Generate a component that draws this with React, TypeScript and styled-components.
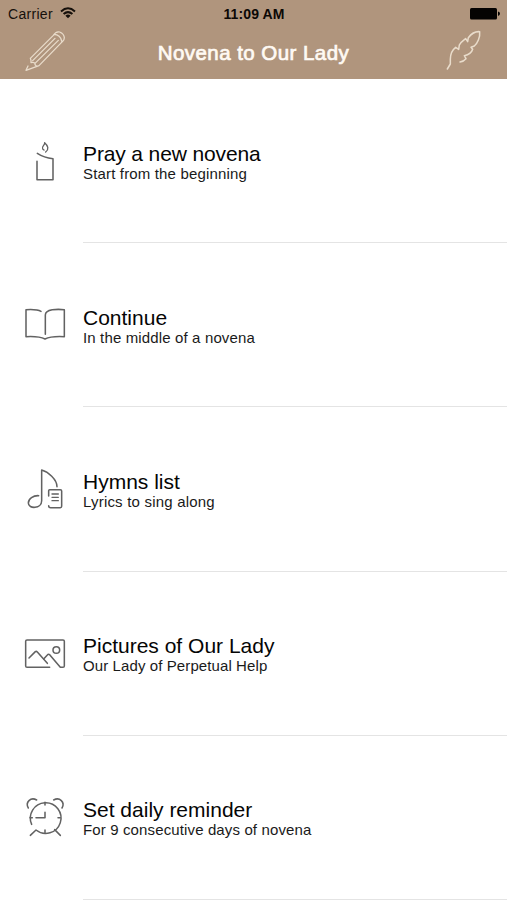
import React from 'react';
import styled, { createGlobalStyle } from 'styled-components';

const Global = createGlobalStyle`
  * { box-sizing: border-box; }
  body { margin: 0; background: #fff; font-family: 'Liberation Sans', Arial, sans-serif; }
`;

const Screen = styled.div`
  width: 507px;
  height: 900px;
  overflow: hidden;
  display: grid;
  grid-template-rows: 79px 1fr;
  background: #fff;
`;

const Header = styled.header`
  display: grid;
  grid-template-rows: 27px 52px;
  background: #b0957d;
`;

const StatusBar = styled.div`
  display: grid;
  grid-template-columns: 1fr auto 1fr;
  align-items: center;
  padding: 1px 7px 0 8px;
  color: #16100b;
  font-size: 14px;
`;

const Carrier = styled.div`
  display: flex;
  align-items: center;
  gap: 7px;
  letter-spacing: 0.3px;
`;

const WifiIcon = styled.svg`
  margin-top: -2px;
`;

const Clock = styled.div`
  font-size: 14px;
  font-weight: 700;
  letter-spacing: 0.1px;
  color: #0c0805;
`;

const BatteryIcon = styled.svg`
  justify-self: end;
`;

const NavBar = styled.div`
  display: grid;
  grid-template-columns: 60px 1fr 60px;
  align-items: center;
  padding: 0 14px;
`;

const NavTitle = styled.h1`
  margin: 0;
  text-align: center;
  color: #fffaf4;
  font-size: 20.5px;
  font-weight: 400;
  line-height: 24px;
  letter-spacing: 0.45px;
  -webkit-text-stroke: 0.7px #fffaf4;
`;

const NavIcon = styled.svg`
  width: 60px;
  height: 52px;
  fill: none;
  stroke: #e9dccb;
  stroke-width: 4.6;
  stroke-linecap: round;
  stroke-linejoin: round;
`;

const List = styled.main`
  display: grid;
  grid-template-rows: repeat(5, 1fr);
`;

const Row = styled.section`
  display: grid;
  grid-template-columns: 60px 1fr;
  column-gap: 8px;
  padding-left: 15px;
`;

const RowIcon = styled.svg`
  align-self: center;
  width: 60px;
  height: 60px;
  fill: none;
  stroke: #626262;
  stroke-width: 4.6;
  stroke-linecap: round;
  stroke-linejoin: round;
`;

const RowText = styled.div`
  display: flex;
  flex-direction: column;
  justify-content: center;
  border-bottom: 1px solid #e4e4e4;
  padding-top: 3px;
`;

const Title = styled.div<{ $track: number }>`
  font-size: 21px;
  line-height: 23px;
  color: #050505;
  letter-spacing: ${(p) => p.$track}px;
`;

const Subtitle = styled.div<{ $track: number }>`
  font-size: 15px;
  line-height: 18px;
  color: #1a1a1a;
  letter-spacing: ${(p) => p.$track}px;
`;

const Candle = () => (
  <RowIcon viewBox="0 3 180 180">
    <path d="M66 94V149H114V86C97 84 81 79 67 70" />
    <path d="M83 57C78 49 91 46 89 38C99 47 103 57 92 66M83 57L87 60" strokeWidth="4" />
  </RowIcon>
);

const Book = () => (
  <RowIcon viewBox="0 1 180 180">
    <path d="M78 50C66 43 49 44 33 45V126C52 125 74 125 90 133C106 125 129 125 148 126V45C127 43 91 43 91 61V119" />
  </RowIcon>
);

const Hymn = () => (
  <RowIcon viewBox="0 -2 180 180">
    <path d="M71 108C55 107 40 117 40 130C40 149 80 148 80 123V31C99 36 126 59 126 81" />
    <path d="M101 109V93Q101 90 104 90H136Q140 90 140 94V140Q140 144 136 144H107Q101 144 101 138" />
    <path d="M111 103H130M111 113H130M111 123H130" strokeWidth="4" />
  </RowIcon>
);

const Picture = () => (
  <RowIcon viewBox="0 -4 180 180">
    <path d="M104 126H36Q32 126 32 122V48Q32 44 36 44H144Q148 44 148 48V122Q148 126 144 126H136L104 88Q100 85 97 89L86 101" />
    <path d="M42 98L61 79Q64 77 67 80L97 114" />
    <circle cx="124" cy="74" r="10" />
  </RowIcon>
);

const Alarm = () => (
  <RowIcon viewBox="0 3 180 180">
    <path d="M50 112A46 46 0 1 1 63 129L46 145M119 128L136 145" />
    <path d="M90 46V54M90 129V137M45 92H52M129 92H136M90 76V92H63" />
    <path d="M40 63C30 46 47 29 65 39M116 39C134 29 151 46 141 63" />
  </RowIcon>
);

const entries = [
  { Icon: Candle, title: 'Pray a new novena', sub: 'Start from the beginning', tt: -0.13, st: 0.16 },
  { Icon: Book, title: 'Continue', sub: 'In the middle of a novena', tt: 0, st: 0.14 },
  { Icon: Hymn, title: 'Hymns list', sub: 'Lyrics to sing along', tt: 0, st: 0.2 },
  { Icon: Picture, title: 'Pictures of Our Lady', sub: 'Our Lady of Perpetual Help', tt: 0, st: 0.1 },
  { Icon: Alarm, title: 'Set daily reminder', sub: 'For 9 consecutive days of novena', tt: 0, st: 0.13 },
];

export default function App() {
  return (
    <>
      <Global />
      <Screen>
        <Header>
          <StatusBar>
            <Carrier>
              <span>Carrier</span>
              <WifiIcon width="16" height="12" viewBox="0 0 16 12" fill="none" stroke="#16100b" strokeWidth="2">
                <path d="M1 4.4Q8-1.8 15 4.4M3.6 7.1Q8 3.1 12.4 7.1" />
                <path d="M5.4 8.7Q8 6.5 10.6 8.7L8 11.3Z" fill="#16100b" stroke="none" />
              </WifiIcon>
            </Carrier>
            <Clock>11:09 AM</Clock>
            <BatteryIcon width="30" height="12" viewBox="0 0 30 12">
              <rect width="27" height="11.5" rx="1.5" fill="#050302" />
              <path d="M28 3.6Q30 4.2 30 5.8T28 8Z" fill="#050302" />
            </BatteryIcon>
          </StatusBar>
          <NavBar>
            <NavIcon viewBox="42 81 180 156">
              <path
                d="M91 175L160 106Q168 93 179 96Q192 101 193 113Q193 120 187 125L117 197L78 211L84 198M91 175Q94 181 93 188Q101 186 105 190Q104 196 110 198M98 182L165 115M105 190L175 121M162 103Q181 104 185 123"
                strokeWidth="3.8"
              />
            </NavIcon>
            <NavTitle>Novena to Our Lady</NavTitle>
            <NavIcon viewBox="39 81 180 156">
              <path d="M82 207L91 192V178C91 162 99 148 107 142L116 148L118 135C122 126 133 120 137 116L143 125L145 113C154 101 167 94 179 95C181 112 172 131 163 138L153 142L158 148C155 158 145 165 133 167L138 176Q130 185 120 186" />
            </NavIcon>
          </NavBar>
        </Header>
        <List>
          {entries.map(({ Icon, title, sub, tt, st }) => (
            <Row key={title}>
              <Icon />
              <RowText>
                <Title $track={tt}>{title}</Title>
                <Subtitle $track={st}>{sub}</Subtitle>
              </RowText>
            </Row>
          ))}
        </List>
      </Screen>
    </>
  );
}
